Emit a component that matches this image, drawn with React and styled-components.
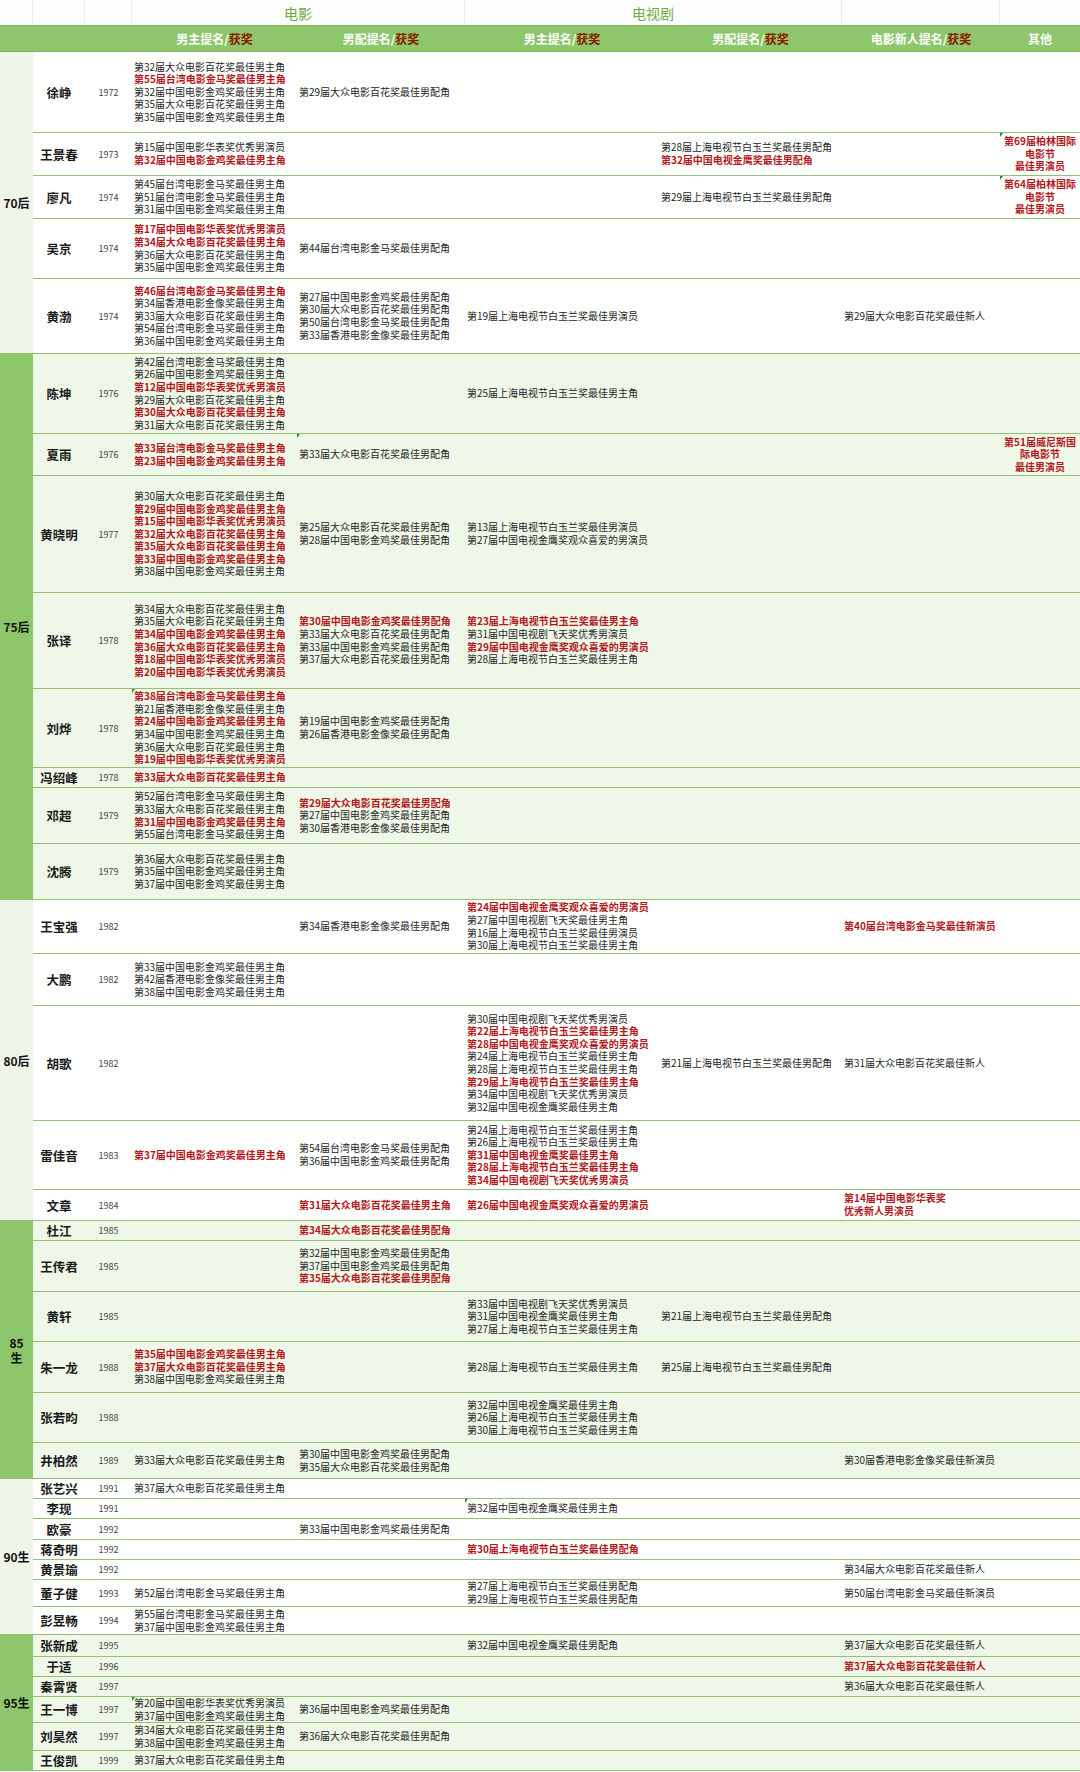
import React from 'react'
import styled, { createGlobalStyle } from 'styled-components'

const GlobalStyle = createGlobalStyle`
  body {
    margin: 0;
    background: #fff;
    font-family: "Noto Sans CJK SC", "Noto Sans", sans-serif;
    color: #222;
  }
`

const GREEN = '#8dc66b'
const LINE = '#93c073'
const RED = '#b3191c'

const Table = styled.div`
  width: 1080px;
`

const TopHeader = styled.div`
  display: grid;
  grid-template-columns: 33px 52px 47px 333px 377px 158px 80px;
  height: 25px;
  background: #fcfdfc;
`

const TopCell = styled.div`
  border-right: 1px solid #e7ece7;
  display: flex;
  align-items: center;
  justify-content: center;
  font-size: 14px;
  color: #6cab3f;
  &:last-child {
    border-right: none;
  }
`

const SubHeader = styled.div`
  display: grid;
  grid-template-columns: 132px 165px 168px 194px 183px 158px 80px;
  height: 27px;
  box-sizing: border-box;
  background: ${GREEN};
  border-top: 1px solid #7fb85a;
  border-bottom: 1px solid #7fb356;
`

const SubCell = styled.div`
  display: flex;
  align-items: center;
  justify-content: center;
  font-size: 12px;
  font-weight: bold;
  color: #fff;
`

const Won = styled.span`
  color: #8b1a00;
`

const Group = styled.div`
  display: grid;
  grid-template-columns: 33px 1fr;
  border-right: 1px solid ${LINE};
`

const Era = styled.div`
  display: flex;
  align-items: center;
  justify-content: center;
  text-align: center;
  white-space: pre-line;
  box-sizing: border-box;
  border-bottom: 1px solid ${LINE};
  background: ${(p) => (p.$tone === 'green' ? GREEN : '#eef5e9')};
  font-size: 12px;
  font-weight: bold;
  line-height: 15px;
  color: #111;
`

const Rows = styled.div`
  display: flex;
  flex-direction: column;
`

const Row = styled.div`
  display: grid;
  grid-template-columns: 52px 47px 165px 168px 194px 183px 158px 80px;
  height: ${(p) => p.$h}px;
  box-sizing: border-box;
  border-bottom: 1px solid ${LINE};
  background: ${(p) => (p.$tone === 'green' ? '#eff7e8' : '#fff')};
`

const Name = styled.div`
  display: flex;
  align-items: center;
  justify-content: center;
  font-size: 12.5px;
  font-weight: bold;
  color: #1a1a1a;
  white-space: nowrap;
`

const Year = styled.div`
  display: flex;
  align-items: center;
  justify-content: center;
  font-size: 9px;
  color: #444;
`

const Cell = styled.div`
  position: relative;
  display: flex;
  flex-direction: column;
  justify-content: center;
  align-items: ${(p) => (p.$center ? 'center' : 'flex-start')};
  text-align: ${(p) => (p.$center ? 'center' : 'left')};
  padding-left: ${(p) => (p.$center ? 0 : 2)}px;
  font-size: 10px;
  line-height: 12.6px;
  white-space: nowrap;

  &::before {
    content: '';
    display: ${(p) => (p.$mark ? 'block' : 'none')};
    position: absolute;
    top: 0;
    left: 0;
    border-top: 4px solid #2f8a2a;
    border-right: 3px solid transparent;
  }
`

const Line = styled.span`
  color: ${(p) => (p.$red ? RED : '#262626')};
  font-weight: ${(p) => (p.$red ? 'bold' : 'normal')};
`

const groups = [
  {
    era: '70后',
    tone: 'light',
    rows: [
      {
        name: '徐峥', year: 1972, h: 81,
        fl: ['第32届大众电影百花奖最佳男主角', '*第55届台湾电影金马奖最佳男主角', '第32届中国电影金鸡奖最佳男主角', '第35届大众电影百花奖最佳男主角', '第35届中国电影金鸡奖最佳男主角'],
        fs: ['第29届大众电影百花奖最佳男配角'],
      },
      {
        name: '王景春', year: 1973, h: 43, marks: ['ot'],
        fl: ['第15届中国电影华表奖优秀男演员', '*第32届中国电影金鸡奖最佳男主角'],
        ts: ['第28届上海电视节白玉兰奖最佳男配角', '*第32届中国电视金鹰奖最佳男配角'],
        ot: ['*第69届柏林国际', '*电影节', '*最佳男演员'],
      },
      {
        name: '廖凡', year: 1974, h: 43, marks: ['ot'],
        fl: ['第45届台湾电影金马奖最佳男主角', '第51届台湾电影金马奖最佳男主角', '第31届中国电影金鸡奖最佳男主角'],
        ts: ['第29届上海电视节白玉兰奖最佳男配角'],
        ot: ['*第64届柏林国际', '*电影节', '*最佳男演员'],
      },
      {
        name: '吴京', year: 1974, h: 60,
        fl: ['*第17届中国电影华表奖优秀男演员', '*第34届大众电影百花奖最佳男主角', '第36届大众电影百花奖最佳男主角', '第35届中国电影金鸡奖最佳男主角'],
        fs: ['第44届台湾电影金马奖最佳男配角'],
      },
      {
        name: '黄渤', year: 1974, h: 75,
        fl: ['*第46届台湾电影金马奖最佳男主角', '第34届香港电影金像奖最佳男主角', '第33届大众电影百花奖最佳男主角', '第54届台湾电影金马奖最佳男主角', '第36届中国电影金鸡奖最佳男主角'],
        fs: ['第27届中国电影金鸡奖最佳男配角', '第30届大众电影百花奖最佳男配角', '第50届台湾电影金马奖最佳男配角', '第33届香港电影金像奖最佳男配角'],
        tl: ['第19届上海电视节白玉兰奖最佳男演员'],
        nw: ['第29届大众电影百花奖最佳新人'],
      },
    ],
  },
  {
    era: '75后',
    tone: 'green',
    rows: [
      {
        name: '陈坤', year: 1976, h: 80,
        fl: ['第42届台湾电影金马奖最佳男主角', '第26届中国电影金鸡奖最佳男主角', '*第12届中国电影华表奖优秀男演员', '第29届大众电影百花奖最佳男主角', '*第30届大众电影百花奖最佳男主角', '第31届大众电影百花奖最佳男主角'],
        tl: ['第25届上海电视节白玉兰奖最佳男主角'],
      },
      {
        name: '夏雨', year: 1976, h: 42, marks: ['fs'],
        fl: ['*第33届台湾电影金马奖最佳男主角', '*第23届中国电影金鸡奖最佳男主角'],
        fs: ['第33届大众电影百花奖最佳男配角'],
        ot: ['*第51届威尼斯国', '*际电影节', '*最佳男演员'],
      },
      {
        name: '黄晓明', year: 1977, h: 117,
        fl: ['第30届大众电影百花奖最佳男主角', '*第29届中国电影金鸡奖最佳男主角', '*第15届中国电影华表奖优秀男演员', '*第32届大众电影百花奖最佳男主角', '*第35届大众电影百花奖最佳男主角', '*第33届中国电影金鸡奖最佳男主角', '第38届中国电影金鸡奖最佳男主角'],
        fs: ['第25届大众电影百花奖最佳男配角', '第28届中国电影金鸡奖最佳男配角'],
        tl: ['第13届上海电视节白玉兰奖最佳男演员', '第27届中国电视金鹰奖观众喜爱的男演员'],
      },
      {
        name: '张译', year: 1978, h: 96,
        fl: ['第34届大众电影百花奖最佳男主角', '第35届大众电影百花奖最佳男主角', '*第34届中国电影金鸡奖最佳男主角', '*第36届大众电影百花奖最佳男主角', '*第18届中国电影华表奖优秀男演员', '*第20届中国电影华表奖优秀男演员'],
        fs: ['*第30届中国电影金鸡奖最佳男配角', '第33届大众电影百花奖最佳男配角', '第33届中国电影金鸡奖最佳男配角', '第37届大众电影百花奖最佳男配角'],
        tl: ['*第23届上海电视节白玉兰奖最佳男主角', '第31届中国电视剧飞天奖优秀男演员', '*第29届中国电视金鹰奖观众喜爱的男演员', '第28届上海电视节白玉兰奖最佳男主角'],
      },
      {
        name: '刘烨', year: 1978, h: 79, marks: ['fl'],
        fl: ['*第38届台湾电影金马奖最佳男主角', '第21届香港电影金像奖最佳男主角', '*第24届中国电影金鸡奖最佳男主角', '第34届中国电影金鸡奖最佳男主角', '第36届大众电影百花奖最佳男主角', '*第19届中国电影华表奖优秀男演员'],
        fs: ['第19届中国电影金鸡奖最佳男配角', '第26届香港电影金像奖最佳男配角'],
      },
      {
        name: '冯绍峰', year: 1978, h: 20,
        fl: ['*第33届大众电影百花奖最佳男主角'],
      },
      {
        name: '邓超', year: 1979, h: 56,
        fl: ['第52届台湾电影金马奖最佳男主角', '第33届大众电影百花奖最佳男主角', '*第31届中国电影金鸡奖最佳男主角', '第55届台湾电影金马奖最佳男主角'],
        fs: ['*第29届大众电影百花奖最佳男配角', '第27届中国电影金鸡奖最佳男配角', '第30届香港电影金像奖最佳男配角'],
      },
      {
        name: '沈腾', year: 1979, h: 56,
        fl: ['第36届大众电影百花奖最佳男主角', '第35届中国电影金鸡奖最佳男主角', '第37届中国电影金鸡奖最佳男主角'],
      },
    ],
  },
  {
    era: '80后',
    tone: 'light',
    rows: [
      {
        name: '王宝强', year: 1982, h: 54,
        fs: ['第34届香港电影金像奖最佳男配角'],
        tl: ['*第24届中国电视金鹰奖观众喜爱的男演员', '第27届中国电视剧飞天奖最佳男主角', '第16届上海电视节白玉兰奖最佳男演员', '第30届上海电视节白玉兰奖最佳男主角'],
        nw: ['*第40届台湾电影金马奖最佳新演员'],
      },
      {
        name: '大鹏', year: 1982, h: 52,
        fl: ['第33届中国电影金鸡奖最佳男主角', '第42届香港电影金像奖最佳男主角', '第38届中国电影金鸡奖最佳男主角'],
      },
      {
        name: '胡歌', year: 1982, h: 115,
        tl: ['第30届中国电视剧飞天奖优秀男演员', '*第22届上海电视节白玉兰奖最佳男主角', '*第28届中国电视金鹰奖观众喜爱的男演员', '第24届上海电视节白玉兰奖最佳男主角', '第28届上海电视节白玉兰奖最佳男主角', '*第29届上海电视节白玉兰奖最佳男主角', '第34届中国电视剧飞天奖优秀男演员', '第32届中国电视金鹰奖最佳男主角'],
        ts: ['第21届上海电视节白玉兰奖最佳男配角'],
        nw: ['第31届大众电影百花奖最佳新人'],
      },
      {
        name: '雷佳音', year: 1983, h: 69,
        fl: ['*第37届中国电影金鸡奖最佳男主角'],
        fs: ['第54届台湾电影金马奖最佳男配角', '第36届中国电影金鸡奖最佳男配角'],
        tl: ['第24届上海电视节白玉兰奖最佳男主角', '第26届上海电视节白玉兰奖最佳男主角', '*第31届中国电视金鹰奖最佳男主角', '*第28届上海电视节白玉兰奖最佳男主角', '*第34届中国电视剧飞天奖优秀男演员'],
      },
      {
        name: '文章', year: 1984, h: 31,
        fs: ['*第31届大众电影百花奖最佳男主角'],
        tl: ['*第26届中国电视金鹰奖观众喜爱的男演员'],
        nw: ['*第14届中国电影华表奖', '*优秀新人男演员'],
      },
    ],
  },
  {
    era: '85\n生',
    tone: 'green',
    rows: [
      {
        name: '杜江', year: 1985, h: 20,
        fs: ['*第34届大众电影百花奖最佳男配角'],
      },
      {
        name: '王传君', year: 1985, h: 51,
        fs: ['第32届中国电影金鸡奖最佳男配角', '第37届中国电影金鸡奖最佳男配角', '*第35届大众电影百花奖最佳男配角'],
      },
      {
        name: '黄轩', year: 1985, h: 50,
        tl: ['第33届中国电视剧飞天奖优秀男演员', '第31届中国电视金鹰奖最佳男主角', '第27届上海电视节白玉兰奖最佳男主角'],
        ts: ['第21届上海电视节白玉兰奖最佳男配角'],
      },
      {
        name: '朱一龙', year: 1988, h: 51,
        fl: ['*第35届中国电影金鸡奖最佳男主角', '*第37届大众电影百花奖最佳男主角', '第38届中国电影金鸡奖最佳男主角'],
        tl: ['第28届上海电视节白玉兰奖最佳男主角'],
        ts: ['第25届上海电视节白玉兰奖最佳男配角'],
      },
      {
        name: '张若昀', year: 1988, h: 50,
        tl: ['第32届中国电视金鹰奖最佳男主角', '第26届上海电视节白玉兰奖最佳男主角', '第30届上海电视节白玉兰奖最佳男主角'],
      },
      {
        name: '井柏然', year: 1989, h: 36,
        fl: ['第33届大众电影百花奖最佳男主角'],
        fs: ['第30届中国电影金鸡奖最佳男配角', '第35届大众电影百花奖最佳男配角'],
        nw: ['第30届香港电影金像奖最佳新演员'],
      },
    ],
  },
  {
    era: '90生',
    tone: 'light',
    rows: [
      { name: '张艺兴', year: 1991, h: 20, fl: ['第37届大众电影百花奖最佳男主角'] },
      { name: '李现', year: 1991, h: 20, marks: ['tl'], tl: ['第32届中国电视金鹰奖最佳男主角'] },
      { name: '欧豪', year: 1992, h: 21, fs: ['第33届中国电影金鸡奖最佳男配角'] },
      { name: '蒋奇明', year: 1992, h: 20, tl: ['*第30届上海电视节白玉兰奖最佳男配角'] },
      { name: '黄景瑜', year: 1992, h: 20, nw: ['第34届大众电影百花奖最佳新人'] },
      {
        name: '董子健', year: 1993, h: 27,
        fl: ['第52届台湾电影金马奖最佳男主角'],
        tl: ['第27届上海电视节白玉兰奖最佳男配角', '第29届上海电视节白玉兰奖最佳男配角'],
        nw: ['第50届台湾电影金马奖最佳新演员'],
      },
      {
        name: '彭昱畅', year: 1994, h: 28,
        fl: ['第55届台湾电影金马奖最佳男主角', '第37届中国电影金鸡奖最佳男主角'],
      },
    ],
  },
  {
    era: '95生',
    tone: 'green',
    rows: [
      {
        name: '张新成', year: 1995, h: 22,
        tl: ['第32届中国电视金鹰奖最佳男配角'],
        nw: ['第37届大众电影百花奖最佳新人'],
      },
      { name: '于适', year: 1996, h: 20, nw: ['*第37届大众电影百花奖最佳新人'] },
      { name: '秦霄贤', year: 1997, h: 20, nw: ['第36届大众电影百花奖最佳新人'] },
      {
        name: '王一博', year: 1997, h: 26, marks: ['fl'],
        fl: ['第20届中国电影华表奖优秀男演员', '第37届中国电影金鸡奖最佳男主角'],
        fs: ['第36届中国电影金鸡奖最佳男配角'],
      },
      {
        name: '刘昊然', year: 1997, h: 28,
        fl: ['第34届大众电影百花奖最佳男主角', '第38届中国电影金鸡奖最佳男主角'],
        fs: ['第36届大众电影百花奖最佳男配角'],
      },
      { name: '王俊凯', year: 1999, h: 20, fl: ['第37届大众电影百花奖最佳男主角'] },
    ],
  },
]

const keys = ['fl', 'fs', 'tl', 'ts', 'nw', 'ot']

const Lines = ({ items = [] }) =>
  items.map((t, i) => {
    const red = t.startsWith('*')
    return (
      <Line key={i} $red={red}>
        {red ? t.slice(1) : t}
      </Line>
    )
  })

const Label = ({ text }) => (
  <SubCell>
    {text}/<Won>获奖</Won>
  </SubCell>
)

const App = () => {
  return (
    <Table>
      <GlobalStyle />
      <TopHeader>
        <TopCell />
        <TopCell />
        <TopCell />
        <TopCell>电影</TopCell>
        <TopCell>电视剧</TopCell>
        <TopCell />
        <TopCell />
      </TopHeader>
      <SubHeader>
        <SubCell />
        <Label text="男主提名" />
        <Label text="男配提名" />
        <Label text="男主提名" />
        <Label text="男配提名" />
        <Label text="电影新人提名" />
        <SubCell>其他</SubCell>
      </SubHeader>
      {groups.map((g) => (
        <Group key={g.era}>
          <Era $tone={g.tone}>{g.era}</Era>
          <Rows>
            {g.rows.map((r) => (
              <Row key={r.name} $h={r.h} $tone={g.tone}>
                <Name>{r.name}</Name>
                <Year>{r.year}</Year>
                {keys.map((k) => (
                  <Cell key={k} $center={k === 'ot'} $mark={r.marks && r.marks.includes(k)}>
                    <Lines items={r[k]} />
                  </Cell>
                ))}
              </Row>
            ))}
          </Rows>
        </Group>
      ))}
    </Table>
  )
}

export default App
